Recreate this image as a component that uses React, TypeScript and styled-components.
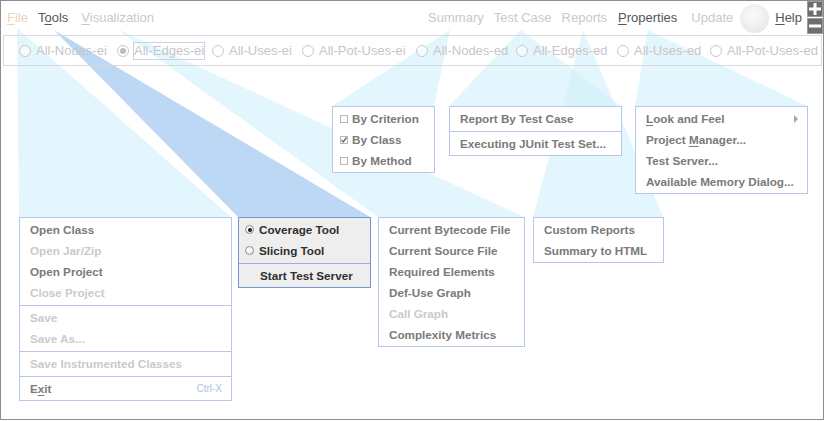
import React from "react";
import styled, { createGlobalStyle, css } from "styled-components";

const FONT = `"Liberation Sans", Arial, Helvetica, sans-serif`;

const Global = createGlobalStyle`
  html, body { margin: 0; padding: 0; background: #ffffff; }
  body { font-family: ${FONT}; }
`;

const Frame = styled.div`
  position: relative;
  width: 824px;
  height: 420px;
  box-sizing: border-box;
  border: 1px solid #8d8d8d;
  background: #ffffff;
  overflow: hidden;
  font-family: ${FONT};
`;

const Beams = styled.svg`
  position: absolute;
  left: -1px;
  top: -1px;
  width: 824px;
  height: 420px;
  z-index: 0;
  pointer-events: none;
`;

/* ---------- menu bar ---------- */

const MenuBar = styled.div`
  position: relative;
  z-index: 1;
  display: flex;
  align-items: center;
  height: 33px;
  padding: 1px 0 0 1px;
  box-sizing: border-box;
`;

type Tone = "file" | "on" | "off";
const toneColor: Record<Tone, string> = {
  file: "#efd2b2",
  on: "#555555",
  off: "#c9c9c9",
};

const Title = styled.span<{ $tone: Tone; $push?: number }>`
  padding: 0 5px;
  margin-left: ${(p) => p.$push ?? 0}px;
  font-size: 13px;
  line-height: 16px;
  color: ${(p) => toneColor[p.$tone]};
  white-space: nowrap;
`;

const Mn = styled.span`
  text-decoration: underline;
  text-underline-offset: 2px;
`;

const Spacer = styled.div`
  flex: 1;
`;

const Orb = styled.div`
  width: 29px;
  height: 29px;
  margin: 0 1px 0 2px;
  border-radius: 50%;
  background: radial-gradient(circle at 45% 40%, #fbfbfb 0%, #efefef 50%, #dedede 100%);
`;

const ZoomStack = styled.div`
  display: flex;
  flex-direction: column;
  gap: 1px;
  align-self: flex-start;
  margin-top: -1px;
`;

const ZoomBtn = styled.div`
  width: 16px;
  height: 16px;
  box-sizing: border-box;
  background: #6e6e6e;
  border: 1px solid #9b9b9b;
  display: flex;
  align-items: center;
  justify-content: center;
`;

/* ---------- criteria row ---------- */

const CriteriaRow = styled.div`
  position: relative;
  z-index: 1;
  margin: 1px 1px 0 2px;
  height: 31px;
  box-sizing: border-box;
  border: 1px solid #d9d9d9;
  display: flex;
  align-items: center;
  padding: 1px 0 0 15px;
`;

const Criterion = styled.div<{ $w?: number }>`
  display: flex;
  align-items: center;
  gap: 4px;
  flex: none;
  width: ${(p) => (p.$w ? `${p.$w}px` : "auto")};
`;

const RoundBox = styled.span<{ $on?: boolean }>`
  position: relative;
  flex: none;
  width: 12px;
  height: 12px;
  box-sizing: border-box;
  border: 1px solid #c8c8c8;
  border-radius: 50%;
  background: rgba(255, 255, 255, 0.6);
  ${(p) =>
    p.$on &&
    css`
      &::after {
        content: "";
        position: absolute;
        left: 2px;
        top: 2px;
        width: 6px;
        height: 6px;
        border-radius: 50%;
        background: #bdbdbd;
      }
    `}
`;

const CriterionText = styled.span<{ $focus?: boolean }>`
  font-size: 13px;
  line-height: 16px;
  color: #c6c6c6;
  border: 1px solid ${(p) => (p.$focus ? "#c6d4ee" : "transparent")};
  white-space: nowrap;
`;

/* ---------- popup menus ---------- */

const Popup = styled.div<{ $x: number; $y: number; $w: number; $active?: boolean }>`
  position: absolute;
  z-index: 2;
  left: ${(p) => p.$x - 1}px;
  top: ${(p) => p.$y - 1}px;
  width: ${(p) => p.$w}px;
  box-sizing: border-box;
  padding: 1px 0;
  border: 1px solid ${(p) => (p.$active ? "#7893cf" : "#b7c7ea")};
  background: ${(p) => (p.$active ? "#eeeeee" : "#ffffff")};
`;

const Item = styled.div<{ $disabled?: boolean; $strong?: boolean; $indent?: number }>`
  height: 21px;
  display: flex;
  align-items: center;
  gap: ${(p) => (p.$indent ? 5 : 0)}px;
  padding: 0 8px 0 ${(p) => p.$indent ?? 10}px;
  font-size: 11.7px;
  font-weight: bold;
  white-space: nowrap;
  color: ${(p) => (p.$disabled ? "#cacaca" : p.$strong ? "#2f2f2f" : "#7a7a7a")};
`;

const ItemLabel = styled.span`
  flex: 1;
`;

const Shortcut = styled.span`
  font-size: 10px;
  font-weight: normal;
  color: #aec1e6;
  margin-right: 1px;
`;

const Separator = styled.div<{ $active?: boolean }>`
  height: 0;
  margin: 2px 0 1px;
  border-top: 1px solid ${(p) => (p.$active ? "#9fb0d6" : "#b7c7ea")};
`;

const ToolRadio = styled.span<{ $on?: boolean }>`
  position: relative;
  width: 9px;
  height: 9px;
  box-sizing: border-box;
  border-radius: 50%;
  border: 1px solid #8f8f8f;
  background: radial-gradient(circle at 40% 35%, #ffffff 0%, #e4e4e4 100%);
  ${(p) =>
    p.$on &&
    css`
      &::after {
        content: "";
        position: absolute;
        left: 1.5px;
        top: 1.5px;
        width: 4px;
        height: 4px;
        border-radius: 50%;
        background: #1e1e1e;
      }
    `}
`;

const CheckBox = styled.span`
  width: 8px;
  height: 8px;
  box-sizing: border-box;
  border: 1px solid #b9b9b9;
  background: #fbfbfb;
  display: flex;
  align-items: center;
  justify-content: center;
  margin-right: -1px;
`;

const Arrow = styled.span`
  width: 0;
  height: 0;
  border-top: 4px solid transparent;
  border-bottom: 4px solid transparent;
  border-left: 4px solid #a5a5a5;
  margin-right: 1px;
`;

/* ---------- data ---------- */

const criteria: { label: string; w?: number }[] = [
  { label: "All-Nodes-ei", w: 98 },
  { label: "All-Edges-ei", w: 95 },
  { label: "All-Uses-ei", w: 90 },
  { label: "All-Pot-Uses-ei", w: 114 },
  { label: "All-Nodes-ed", w: 100 },
  { label: "All-Edges-ed", w: 101 },
  { label: "All-Uses-ed", w: 93 },
  { label: "All-Pot-Uses-ed" },
];

const LIGHT = "rgba(208, 240, 251, 0.6)";

const beams: { pts: string; fill: string }[] = [
  { pts: "17,28 19,217 231,217", fill: LIGHT },
  { pts: "117,29 378,217 524,217", fill: LIGHT },
  { pts: "450,30 332,106 434,106", fill: LIGHT },
  { pts: "521,30 449,106 621,106", fill: LIGHT },
  { pts: "583,30 533,217 663,217", fill: LIGHT },
  { pts: "648,30 635,106 807,106", fill: LIGHT },
  { pts: "54,30 238,217 370,217", fill: "#bdd8f5" },
];

function Check() {
  return (
    <svg width="6" height="6" viewBox="0 0 6 6">
      <path d="M0.5 3 L2.3 5 L5.5 0.5" stroke="#6c6c6c" strokeWidth="1.3" fill="none" />
    </svg>
  );
}

export default function App() {
  return (
    <>
      <Global />
      <Frame>
        <Beams viewBox="0 0 824 420">
          {beams.map((b, i) => (
            <polygon key={i} points={b.pts} fill={b.fill} />
          ))}
        </Beams>

        <MenuBar>
          <Title $tone="file">
            <Mn>F</Mn>ile
          </Title>
          <Title $tone="on">
            T<Mn>o</Mn>ols
          </Title>
          <Title $tone="off" $push={3}>
            <Mn>V</Mn>isualization
          </Title>
          <Spacer />
          <Title $tone="off">Summary</Title>
          <Title $tone="off">Test Case</Title>
          <Title $tone="off">Reports</Title>
          <Title $tone="on" $push={1}>
            <Mn>P</Mn>roperties
          </Title>
          <Title $tone="off" $push={4}>
            Update
          </Title>
          <Orb />
          <Title $tone="on">
            <Mn>H</Mn>elp
          </Title>
          <ZoomStack>
            <ZoomBtn>
              <svg width="12" height="12" viewBox="0 0 12 12">
                <rect x="0" y="4.5" width="12" height="3" fill="#fff" />
                <rect x="4.5" y="0" width="3" height="12" fill="#fff" />
              </svg>
            </ZoomBtn>
            <ZoomBtn>
              <svg width="12" height="12" viewBox="0 0 12 12">
                <rect x="0" y="4.5" width="12" height="3" fill="#fff" />
              </svg>
            </ZoomBtn>
          </ZoomStack>
        </MenuBar>

        <CriteriaRow>
          {criteria.map((c, i) => (
            <Criterion key={c.label} $w={c.w}>
              <RoundBox $on={i === 1} />
              <CriterionText $focus={i === 1}>{c.label}</CriterionText>
            </Criterion>
          ))}
        </CriteriaRow>

        {/* File */}
        <Popup $x={19} $y={217} $w={213}>
          <Item>Open Class</Item>
          <Item $disabled>Open Jar/Zip</Item>
          <Item>Open Project</Item>
          <Item $disabled>Close Project</Item>
          <Separator />
          <Item $disabled>Save</Item>
          <Item $disabled>Save As...</Item>
          <Separator />
          <Item $disabled>Save Instrumented Classes</Item>
          <Separator />
          <Item>
            <ItemLabel>
              E<Mn>x</Mn>it
            </ItemLabel>
            <Shortcut>Ctrl-X</Shortcut>
          </Item>
        </Popup>

        {/* Tools */}
        <Popup $x={238} $y={217} $w={133} $active>
          <Item $strong $indent={6}>
            <ToolRadio $on />
            Coverage Tool
          </Item>
          <Item $strong $indent={6}>
            <ToolRadio />
            Slicing Tool
          </Item>
          <Separator $active />
          <Item $strong $indent={21}>
            Start Test Server
          </Item>
        </Popup>

        {/* Visualization */}
        <Popup $x={378} $y={217} $w={147}>
          <Item>Current Bytecode File</Item>
          <Item>Current Source File</Item>
          <Item>Required Elements</Item>
          <Item>Def-Use Graph</Item>
          <Item $disabled>Call Graph</Item>
          <Item>Complexity Metrics</Item>
        </Popup>

        {/* Summary */}
        <Popup $x={332} $y={106} $w={103}>
          <Item $indent={7}>
            <CheckBox />
            By Criterion
          </Item>
          <Item $indent={7}>
            <CheckBox>
              <Check />
            </CheckBox>
            By Class
          </Item>
          <Item $indent={7}>
            <CheckBox />
            By Method
          </Item>
        </Popup>

        {/* Test Case */}
        <Popup $x={449} $y={106} $w={173}>
          <Item>Report By Test Case</Item>
          <Separator />
          <Item>Executing JUnit Test Set...</Item>
        </Popup>

        {/* Reports */}
        <Popup $x={533} $y={217} $w={131}>
          <Item>Custom Reports</Item>
          <Item>Summary to HTML</Item>
        </Popup>

        {/* Properties */}
        <Popup $x={635} $y={106} $w={173}>
          <Item>
            <ItemLabel>
              <Mn>L</Mn>ook and Feel
            </ItemLabel>
            <Arrow />
          </Item>
          <Item>
            Project&nbsp;<Mn>M</Mn>anager...
          </Item>
          <Item>Test Server...</Item>
          <Item>Available Memory Dialog...</Item>
        </Popup>
      </Frame>
    </>
  );
}
